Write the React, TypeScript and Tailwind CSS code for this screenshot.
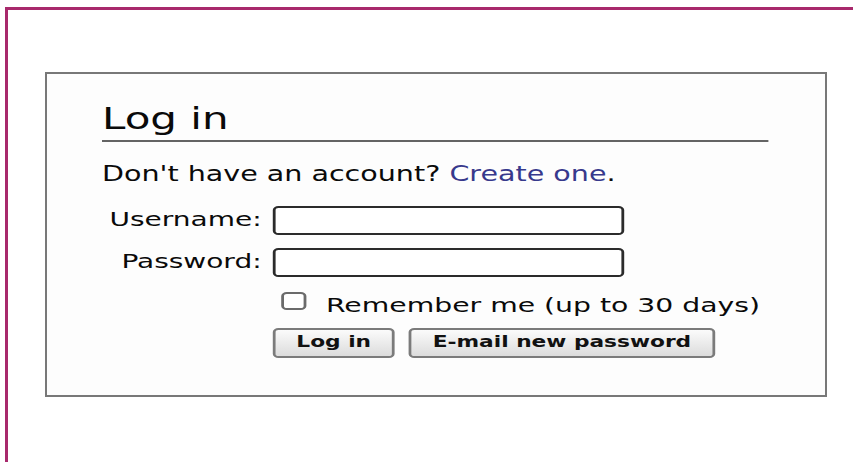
import React from "react";

const font = "font-['DejaVu_Sans','Liberation_Sans',sans-serif]";

function Field({ label, type }: { label: string; type: string }) {
  return (
    <div className="flex items-center">
      <label className="w-[122px] pb-[4px] pr-[8px] text-right text-[20px] leading-[24px] text-[#0a0a0a]">
        {label}
      </label>
      <input
        type={type}
        className="h-[29px] w-[251px] rounded-[4px] border-2 border-[#2b2b2b] bg-white outline-none"
      />
    </div>
  );
}

export default function App() {
  return (
    <div className={`min-h-screen bg-white pl-[5px] pt-[7px] ${font}`}>
      <div className="min-h-[455px] border-l-[3px] border-t-[3px] border-[#a8296c] pl-[37px] pt-[62px]">
        <div className="h-[325px] w-[782px] border-2 border-[#787878] bg-[#fdfdfd] pl-[55px] pt-[28px]">
          <div className="w-[476px] origin-left scale-x-[1.4]">
            <h1 className="border-b-2 border-[#646464] pb-[4px] text-[30px] leading-[34px] text-[#0a0a0a]">
              Log in
            </h1>

            <p className="mt-[18px] text-[20.4px] leading-[28px] text-[#0a0a0a]">
              Don't have an account? <a className="text-[#37398c]">Create one</a>.
            </p>

            <div className="mt-[18px] flex flex-col gap-[13px]">
              <Field label="Username:" type="text" />
              <Field label="Password:" type="password" />
            </div>

            <div className="ml-[122px] mt-[14px] flex items-start">
              <input
                type="checkbox"
                className="ml-[6px] mt-[1px] h-[18px] w-[18px] appearance-none rounded-[4px] border-2 border-[#6b6b6b] bg-white"
              />
              <span className="ml-[14px] text-[20.2px] leading-[28px] text-[#0a0a0a]">
                Remember me (up to 30 days)
              </span>
            </div>

            <div className="ml-[122px] mt-[9px] flex gap-[10px]">
              <button className="h-[30px] w-[87px] rounded-[4px] border-2 border-[#7b7b7b] bg-gradient-to-b from-[#fbfbfb] to-[#dcdcdc] text-[15.5px] font-bold text-[#111]">
                Log in
              </button>
              <button className="h-[30px] w-[219px] rounded-[4px] border-2 border-[#7b7b7b] bg-gradient-to-b from-[#fbfbfb] to-[#dcdcdc] text-[15.5px] font-bold text-[#111]">
                E-mail new password
              </button>
            </div>
          </div>
        </div>
      </div>
    </div>
  );
}
